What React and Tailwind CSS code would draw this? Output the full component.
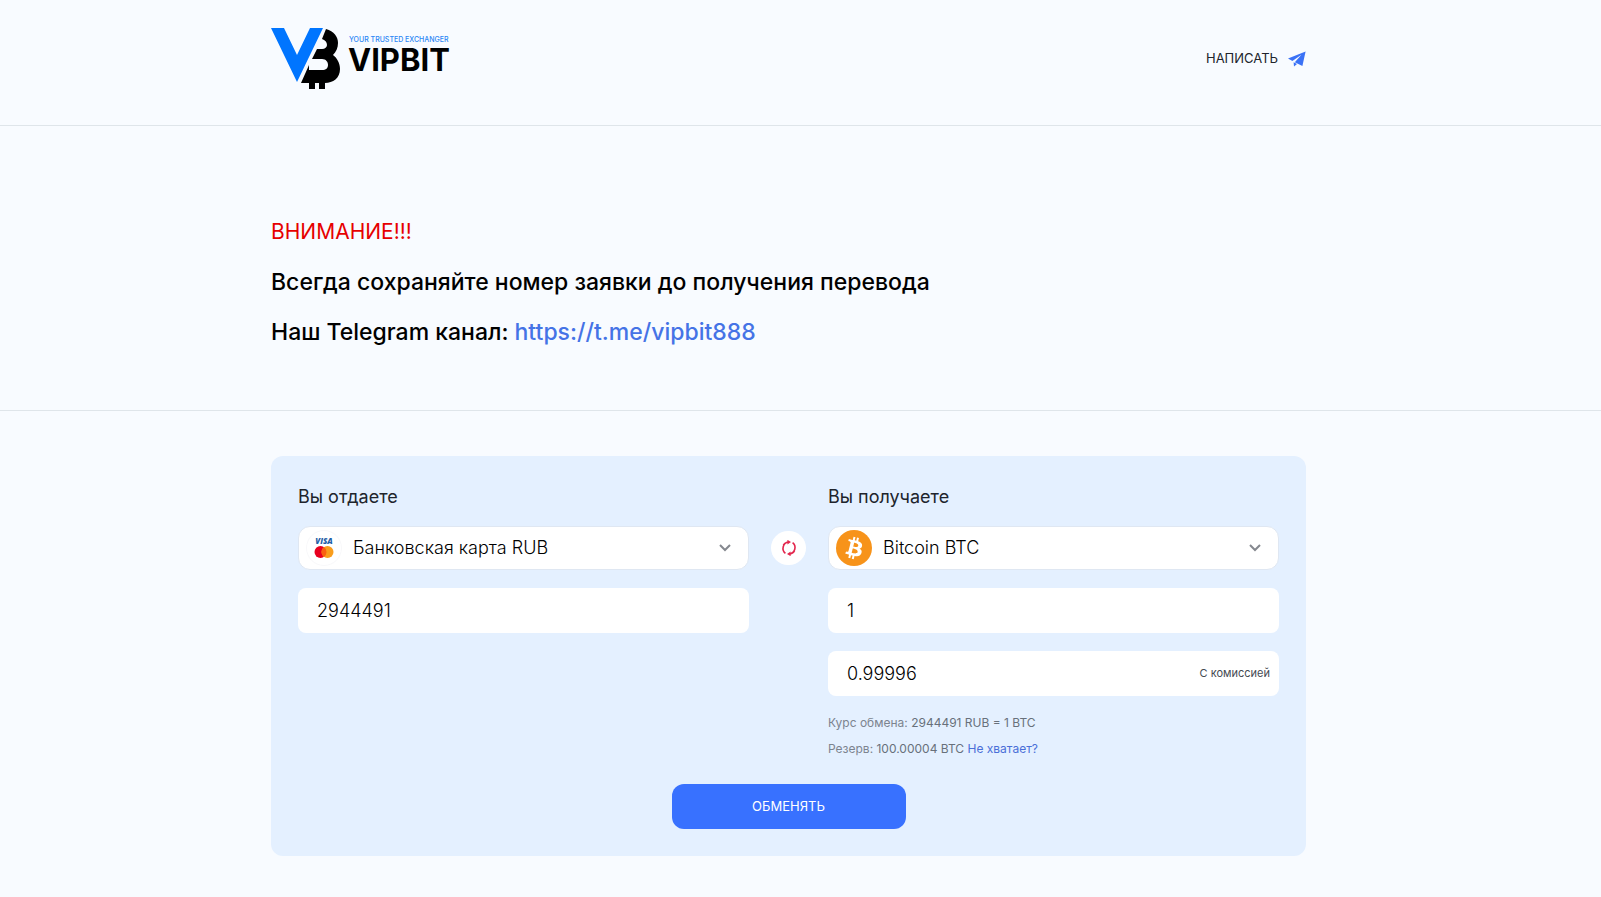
import { useState } from 'react'

const FIELD = 'block w-full h-[45px] rounded-lg bg-white pl-[19px] text-lg font-light text-black outline-none'

function Logo() {
  return (
    <svg width="185" height="64" viewBox="0 0 185 64" role="img" aria-label="VIPBIT">
      <path fill="#0075ff" d="M0 1h13l13 27L39 1h13L26 55z" />
      <path
        fill="#000"
        d="M55 2c8 2 12 8 12 14 0 5-2 9-5 12 4 3 7 8 7 14 0 9-7 14-15 14v6h-6v-6h-4v6h-6v-6h-8L38 38v5h13c4 0 6-2 6-5s-2-6-6-6H41l5-10h5c3 0 5-2 5-4 0-3-2-5-5-6z"
      />
      <text x="78" y="15" fill="#2b86f5" className="font-['Inter'] text-[7px] font-medium">YOUR TRUSTED EXCHANGER</text>
      <text x="77" y="44" fill="#000" className="font-['Inter'] text-[31px] font-bold">VIPBIT</text>
    </svg>
  )
}

function PlaneIcon() {
  return (
    <svg width="18" height="16" viewBox="0 0 18 16">
      <path fill="#3b72f6" d="M17.6.6 0 7.6l4.4 2.4 9-6.2-6.6 7.4 7.6 3.8z" />
      <path fill="#3b72f6" d="M5.6 11.2 9 13l-3 2.6z" />
    </svg>
  )
}

function CardIcon() {
  return (
    <svg width="36" height="36" viewBox="0 0 36 36">
      <circle cx="18" cy="18" r="17.5" fill="#fff" stroke="#f8f8fa" />
      <text x="18" y="14" textAnchor="middle" fill="#1f5fa8" className="font-['Open_Sans'] text-[8px] font-extrabold italic">VISA</text>
      <circle cx="14.5" cy="22" r="6" fill="#e8001f" />
      <circle cx="21.5" cy="22" r="6" fill="#f99d1c" />
      <path fill="#fa6010" d="M18 17.1a6 6 0 0 1 0 9.8 6 6 0 0 1 0-9.8z" />
    </svg>
  )
}

function BitcoinIcon() {
  return (
    <svg width="36" height="36" viewBox="0 0 32 32">
      <circle cx="16" cy="16" r="16" fill="#f7931a" />
      <path
        fill="#fff"
        d="M23.189 14.02c.314-2.096-1.283-3.223-3.465-3.975l.708-2.84-1.728-.43-.69 2.765c-.454-.114-.92-.22-1.385-.326l.695-2.783L15.596 6l-.708 2.839c-.376-.086-.746-.17-1.104-.26l.002-.009-2.384-.595-.46 1.846s1.283.294 1.256.312c.7.175.826.638.805 1.006l-.806 3.235c.048.012.11.03.18.057l-.183-.045-1.13 4.532c-.086.212-.303.531-.793.41.018.025-1.256-.313-1.256-.313l-.858 1.978 2.25.561c.418.105.828.215 1.231.318l-.715 2.872 1.727.43.708-2.84c.472.127.93.245 1.378.357l-.706 2.828 1.728.43.715-2.866c2.948.558 5.164.333 6.097-2.333.752-2.146-.037-3.385-1.588-4.192 1.13-.26 1.98-1.003 2.207-2.538zm-3.95 5.538c-.533 2.147-4.148.986-5.32.695l.95-3.805c1.172.293 4.929.872 4.37 3.11zm.535-5.569c-.487 1.953-3.495.96-4.47.717l.86-3.45c.975.243 4.118.696 3.61 2.733z"
      />
    </svg>
  )
}

function SwapIcon() {
  return (
    <svg width="16" height="16" viewBox="0 0 16 16" fill="none" stroke="#e3264d" strokeWidth="1.6">
      <path d="M4.4 13.3A6.4 6.4 0 0 1 7.4 2M11.6 2.7A6.4 6.4 0 0 1 8.6 14M2.2 5 4.6 2.8M13.8 11l-2.4 2.2" />
      <path fill="#e3264d" stroke="none" d="M6.4-.2 10 2 6.4 4.4zM9.6 16.2 6 14l3.6-2.4z" />
    </svg>
  )
}

function CurrencySelect({ id, icon, option }) {
  return (
    <div className="relative mb-[18px]">
      <select
        id={id}
        className="block w-full h-11 appearance-none rounded-xl border border-[#dfe7f2] bg-white pl-[54px] pr-12 text-lg font-light text-black outline-none"
      >
        <option>{option}</option>
      </select>
      <span className="pointer-events-none absolute left-2 top-1">{icon}</span>
      <svg className="pointer-events-none absolute right-[18px] top-[18px]" width="12" height="8" viewBox="0 0 12 8" fill="none" stroke="#85888f" strokeWidth="2">
        <path d="M1 1l5 5 5-5" />
      </svg>
    </div>
  )
}

export default function App() {
  const [give, setGive] = useState('2944491')
  const [get, setGet] = useState('1')
  const [withFee, setWithFee] = useState('0.99996')

  return (
    <div className="min-h-screen bg-[#f8fbff] font-['Inter',sans-serif] text-black">
      {/* Header */}
      <header className="border-b border-[#dfe5ea] pr-6">
        <div className="mx-auto flex h-[125px] max-w-[1035px] items-center justify-between pb-2">
          <a href="/"><Logo /></a>
          <a href="https://t.me/vipbit888" className="flex items-center gap-2.5 text-[13px] text-[#20242c]">
            НАПИСАТЬ
            <PlaneIcon />
          </a>
        </div>
      </header>

      {/* Notice */}
      <section className="border-b border-[#dfe5ea] pr-6">
        <div className="mx-auto max-w-[1035px] space-y-[14px] pt-[88px] pb-[60px] text-[23px] leading-9">
          <p className="text-[21px] text-[#e60000]">ВНИМАНИЕ!!!</p>
          <p className="font-medium">Всегда сохраняйте номер заявки до получения перевода</p>
          <p className="font-medium">
            Наш Telegram канал: <a href="https://t.me/vipbit888" className="text-[#4573e6]">https://t.me/vipbit888</a>
          </p>
        </div>
      </section>

      {/* Exchange form */}
      <main className="pt-[45px] pr-6">
        <form className="mx-auto max-w-[1035px] rounded-xl bg-[#e4f0ff] p-[27px]" onSubmit={e => e.preventDefault()}>
          <div className="grid grid-cols-[1fr_79px_1fr]">
            <div>
              <label htmlFor="from" className="mb-4 block text-lg leading-[27px] text-[#20242c]">Вы отдаете</label>
              <CurrencySelect id="from" icon={<CardIcon />} option="Банковская карта RUB" />
              <input aria-label="Сумма" className={FIELD} value={give} onChange={e => setGive(e.target.value)} />
            </div>

            <div className="flex items-start justify-center pt-12">
              <button type="button" aria-label="Поменять" className="flex h-[34px] w-[35px] items-center justify-center rounded-full bg-white">
                <SwapIcon />
              </button>
            </div>

            <div>
              <label htmlFor="to" className="mb-4 block text-lg leading-[27px] text-[#20242c]">Вы получаете</label>
              <CurrencySelect id="to" icon={<BitcoinIcon />} option="Bitcoin BTC" />
              <input aria-label="Сумма" className={`${FIELD} text-[#1d4a26]`} value={get} onChange={e => setGet(e.target.value)} />
              <div className="relative mt-[18px]">
                <input id="fee" className={FIELD} value={withFee} onChange={e => setWithFee(e.target.value)} />
                <label htmlFor="fee" className="absolute right-[9px] top-[13px] text-[11px] leading-[18px] text-[#454a52]">С комиссией</label>
              </div>
              <div className="mt-[14px] text-xs leading-[26px] text-[#7c848f]">
                <p>Курс обмена: <span className="text-[#68707b]">2944491 RUB = 1 BTC</span></p>
                <p>
                  Резерв: <span className="text-[#68707b]">100.00004 BTC</span> <a href="#reserve" className="text-[#4a6fd8]">Не хватает?</a>
                </p>
              </div>
            </div>
          </div>

          <button type="submit" className="mx-auto mt-[22px] block h-[45px] w-[234px] rounded-xl bg-[#3871ff] text-[13px] text-white">
            ОБМЕНЯТЬ
          </button>
        </form>
      </main>
    </div>
  )
}
